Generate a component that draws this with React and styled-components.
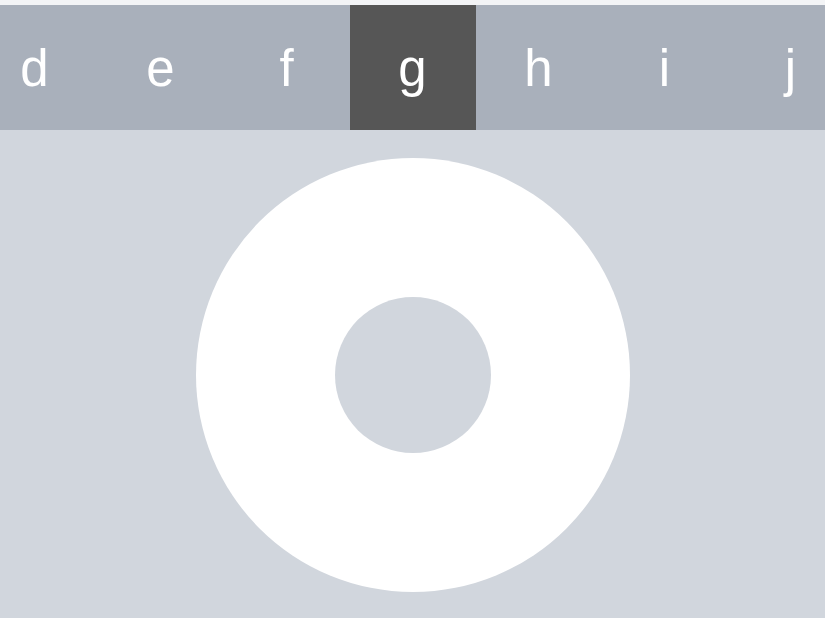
import React from 'react';
import styled, { createGlobalStyle } from 'styled-components';

const GlobalStyle = createGlobalStyle`
    html, body {
        margin: 0;
        padding: 0;
        background: #d1d6dd;
        font-family: "Liberation Sans", Arial, sans-serif;
    }
`;

const Page = styled.div`
    width: 825px;
    height: 618px;
    overflow: hidden;
    display: flex;
    flex-direction: column;
    align-items: center;
`;

const TopEdge = styled.div`
    align-self: stretch;
    height: 5px;
    background: #f3f4f6;
`;

const Strip = styled.div`
    align-self: stretch;
    height: 125px;
    background: #a9b0bb;
    display: flex;
    justify-content: center;
    overflow: hidden;
`;

const Cell = styled.div`
    flex: 0 0 126px;
    display: flex;
    align-items: center;
    justify-content: center;
    padding-top: 1px;
    box-sizing: border-box;
    font-size: 51px;
    color: #fff;
    background: ${p => (p.$active ? '#565656' : 'transparent')};
`;

const Wheel = styled.div`
    margin-top: 28px;
    width: 434px;
    height: 434px;
    border-radius: 50%;
    background: #fff;
    display: flex;
    align-items: center;
    justify-content: center;
`;

const Hub = styled.div`
    width: 156px;
    height: 156px;
    border-radius: 50%;
    background: #d1d6dd;
`;

const letters = ['d', 'e', 'f', 'g', 'h', 'i', 'j'];

export default function App() {
    return (
        <>
            <GlobalStyle />
            <Page>
                <TopEdge />
                <Strip>
                    {letters.map(l => (
                        <Cell key={l} $active={l === 'g'}>{l}</Cell>
                    ))}
                </Strip>
                <Wheel>
                    <Hub />
                </Wheel>
            </Page>
        </>
    );
}
